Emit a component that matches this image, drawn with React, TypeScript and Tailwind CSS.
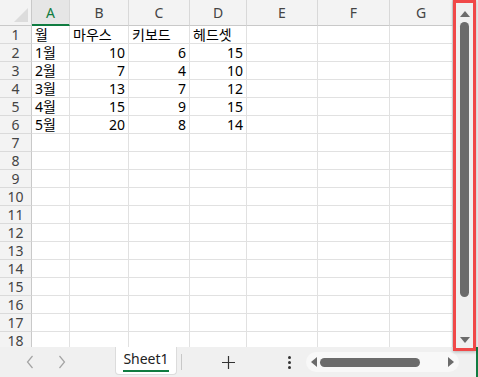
import React from "react";

const cols = ["A", "B", "C", "D", "E", "F", "G"];

const data: (string | number)[][] = [
  ["월", "마우스", "키보드", "헤드셋"],
  ["1월", 10, 6, 15],
  ["2월", 7, 4, 10],
  ["3월", 13, 7, 12],
  ["4월", 15, 9, 15],
  ["5월", 20, 8, 14],
];

const rows = Array.from({ length: 18 }, (_, i) => i + 1);

export default function App() {
  return (
    <div
      className="relative w-[478px] h-[377px] overflow-hidden bg-white flex flex-col text-[14px] text-black"
      style={{ fontFamily: '"Noto Sans", "Noto Sans CJK KR", sans-serif' }}
    >
      <div className="flex h-[347px] overflow-hidden">
        {/* sheet grid */}
        <div className="w-[453px] overflow-hidden">
          <div className="grid grid-cols-[32px_38px_59px_61px_57px_71px_72px_63px] grid-rows-[26px_repeat(18,18px)] w-[453px]">
            {/* corner */}
            <div className="relative bg-[#f3f3f3] border-r border-b border-[#c9c9c9]">
              <div className="absolute right-[3px] bottom-[3px] w-0 h-0 border-l-[14px] border-l-transparent border-b-[14px] border-b-[#dcdcdc]" />
            </div>
            {cols.map((c) => (
              <div
                key={c}
                className={
                  c === "A"
                    ? "flex items-center justify-center bg-[#e6e6e6] border-r border-[#d8d8d8] border-b-2 border-b-[#107c41] text-[#107c41] text-[14px]"
                    : "flex items-center justify-center bg-[#f3f3f3] border-r border-[#d8d8d8] border-b border-b-[#c9c9c9] text-[#444] text-[14px]"
                }
              >
                {c}
              </div>
            ))}
            {rows.map((r) => (
              <React.Fragment key={r}>
                <div className="flex items-center justify-center bg-[#f3f3f3] border-r border-r-[#c9c9c9] border-b border-b-[#dadada] text-[#444] text-[14px] leading-[18px]">
                  {r}
                </div>
                {cols.map((c, ci) => {
                  const v = data[r - 1]?.[ci];
                  const isNum = typeof v === "number";
                  return (
                    <div
                      key={c}
                      className={
                        "flex items-center border-r border-b border-[#e1e1e1] px-[3px] leading-[18px] whitespace-nowrap " +
                        (isNum ? "justify-end" : "justify-start")
                      }
                    >
                      {v ?? ""}
                    </div>
                  );
                })}
              </React.Fragment>
            ))}
          </div>
        </div>
        {/* vertical scrollbar */}
        <div className="w-[25px] bg-[#f0f0f0] flex flex-col items-center pl-[1px] pr-[3px]">
          <div className="mt-[11px] w-0 h-0 border-l-[5px] border-l-transparent border-r-[5px] border-r-transparent border-b-[6px] border-b-[#6b6b6b]" />
          <div className="mt-[5px] w-[9px] h-[275px] rounded-full bg-[#6b6b6b]" />
          <div className="mt-auto mb-[4px] w-0 h-0 border-l-[5px] border-l-transparent border-r-[5px] border-r-transparent border-t-[6px] border-t-[#6b6b6b]" />
        </div>
      </div>

      {/* sheet tab bar */}
      <div className="flex items-center h-[30px] bg-[#f0f0f0] border-r-2 border-r-[#107c41]">
        <svg className="ml-[26px]" width="8" height="14" viewBox="0 0 8 14">
          <path d="M6.5 1 L1.5 7 L6.5 13" fill="none" stroke="#a3a3a3" strokeWidth="1.2" />
        </svg>
        <svg className="ml-[24px]" width="8" height="14" viewBox="0 0 8 14">
          <path d="M1.5 1 L6.5 7 L1.5 13" fill="none" stroke="#a3a3a3" strokeWidth="1.2" />
        </svg>
        <div className="ml-[49px] self-start h-[28px] w-[62px] bg-white rounded-b-[4px] border-x border-b border-[#dcdcdc] flex flex-col items-center pt-[3px]">
          <span className="text-[14px] leading-[18px] text-[#222]">Sheet1</span>
          <div className="mt-[2px] w-[46px] h-[2px] bg-[#107c41]" />
        </div>
        <div className="ml-[4px] w-px h-[16px] bg-[#c8c8c8]" />
        <svg className="ml-[40px]" width="13" height="13" viewBox="0 0 13 13">
          <path d="M6.5 0 V13 M0 6.5 H13" stroke="#333" strokeWidth="1.2" />
        </svg>
        <div className="ml-[53px] flex flex-col gap-[2px]">
          <div className="w-[3px] h-[3px] bg-[#333] rounded-full" />
          <div className="w-[3px] h-[3px] bg-[#333] rounded-full" />
          <div className="w-[3px] h-[3px] bg-[#333] rounded-full" />
        </div>
        <div className="ml-[15px] w-[153px] h-[20px] rounded-full bg-[#f8f8f8] flex items-center px-[5px]">
          <div className="w-0 h-0 border-t-[5px] border-t-transparent border-b-[5px] border-b-transparent border-r-[6px] border-r-[#6b6b6b]" />
          <div className="ml-[3px] w-[100px] h-[9px] rounded-full bg-[#6b6b6b]" />
          <div className="ml-auto w-0 h-0 border-t-[5px] border-t-transparent border-b-[5px] border-b-transparent border-l-[6px] border-l-[#6b6b6b]" />
        </div>
      </div>

      {/* highlight around the vertical scrollbar */}
      <div className="absolute left-[453px] top-0 w-[23px] h-[351px] border-[3px] border-[#f04848] shadow-[0_1px_3px_rgba(0,0,0,0.25)]" />
    </div>
  );
}
